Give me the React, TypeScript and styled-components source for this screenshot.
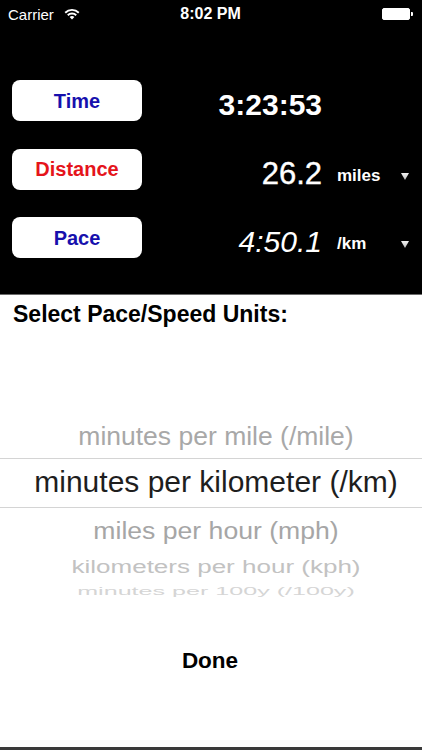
import React from "react";
import styled, { createGlobalStyle, css } from "styled-components";

const GlobalStyle = createGlobalStyle`
  html, body { margin: 0; padding: 0; background: #ffffff; }
  body { font-family: "Liberation Sans", Arial, Helvetica, sans-serif; }
  * { box-sizing: border-box; }
`;

const FONT = `"Liberation Sans", Arial, Helvetica, sans-serif`;

const Screen = styled.div`
  width: 422px;
  height: 750px;
  overflow: hidden;
  display: flex;
  flex-direction: column;
  background: #fff;
  font-family: ${FONT};
`;

const Header = styled.header`
  flex-shrink: 0;
  height: 295px;
  background: #000;
  border-bottom: 1px solid #6b6b6b;
  display: flex;
  flex-direction: column;
`;

const StatusBar = styled.div`
  height: 28px;
  display: grid;
  grid-template-columns: 1fr auto 1fr;
  align-items: center;
  padding: 0 9px 0 8px;
  color: #fff;
`;

const StatusLeft = styled.div`
  display: flex;
  align-items: center;
  gap: 10px;
  font-size: 15px;
  line-height: 1;
`;

const Clock = styled.div`
  font-size: 16px;
  font-weight: 700;
  line-height: 1;
`;

const StatusRight = styled.div`
  display: flex;
  justify-content: flex-end;
  align-items: center;
`;

const Battery = styled.div`
  display: flex;
  align-items: center;
  gap: 1px;
`;

const BatteryBody = styled.div`
  width: 28px;
  height: 12px;
  border: 1px solid #fff;
  border-radius: 2px;
  background: #fff;
`;

const BatteryNub = styled.div`
  width: 2px;
  height: 4px;
  background: #fff;
  border-radius: 0 1px 1px 0;
`;

const Rows = styled.div`
  display: flex;
  flex-direction: column;
  gap: 27.5px;
  padding-top: 52px;
`;

const Row = styled.div`
  display: flex;
  align-items: flex-start;
  height: 41px;
  padding: 0 13px 0 12px;
`;

const LabelButton = styled.button<{ $color: string }>`
  width: 130px;
  height: 41px;
  flex-shrink: 0;
  border: none;
  border-radius: 8px;
  background: #fff;
  color: ${(p) => p.$color};
  font: 700 20px/1 ${FONT};
  padding: 0;
  display: flex;
  align-items: center;
  justify-content: center;
`;

const Value = styled.div<{ $variant: "bold" | "medium" | "italic" }>`
  flex: 1;
  text-align: right;
  margin-top: 10px;
  font-size: 30px;
  line-height: 30px;
  color: #fff;
  white-space: nowrap;
  ${(p) =>
    p.$variant === "bold" &&
    css`
      font-weight: 700;
    `}
  ${(p) =>
    p.$variant === "medium" &&
    css`
      font-size: 31px;
      -webkit-text-stroke: 0.4px #fff;
    `}
  ${(p) =>
    p.$variant === "italic" &&
    css`
      font-style: italic;
      font-weight: 400;
    `}
`;

const Unit = styled.div`
  width: 79px;
  flex-shrink: 0;
  padding-left: 15px;
  margin-top: 18px;
  font: 700 17px/17px ${FONT};
  color: #fff;
  white-space: nowrap;
`;

const ArrowSlot = styled.div`
  width: 8px;
  height: 7px;
  flex-shrink: 0;
  margin-top: 24px;
  display: flex;
`;

const Sheet = styled.section`
  flex: 1;
  display: flex;
  flex-direction: column;
  background: #fff;
`;

const Title = styled.h2`
  margin: 0;
  padding: 7.5px 0 0 13px;
  font: 700 23px/23px ${FONT};
  color: #000;
`;

const Picker = styled.div`
  height: 272.5px;
  overflow: hidden;
  padding-top: 89.5px;
  display: flex;
  flex-direction: column;
`;

const PickerItem = styled.div<{
  $h: number;
  $size: number;
  $color: string;
  $selected?: boolean;
}>`
  flex-shrink: 0;
  height: ${(p) => p.$h}px;
  padding-left: 10px;
  display: flex;
  align-items: center;
  justify-content: center;
  font-size: ${(p) => p.$size}px;
  line-height: 1;
  color: ${(p) => p.$color};
  white-space: nowrap;
  ${(p) =>
    p.$selected &&
    css`
      border-top: 1px solid #d4d4d4;
      border-bottom: 1px solid #d4d4d4;
      padding-bottom: 3px;
    `}
`;

const ItemText = styled.span<{ $scale: number }>`
  display: inline-block;
  transform: scaleY(${(p) => p.$scale});
`;

const DoneButton = styled.button`
  margin: 52px auto 0;
  padding: 0;
  border: none;
  background: none;
  font: 700 22.5px/1 ${FONT};
  color: #000;
  transform: translateX(-1px);
`;

const BottomBar = styled.div`
  margin-top: auto;
  height: 3px;
  background: #3a3a3a;
  flex-shrink: 0;
`;

const WifiIcon = () => (
  <svg width="16" height="12" viewBox="0 0 16 12">
    <path d="M8 11.5 L5.6 9.1 A3.4 3.4 0 0 1 10.4 9.1 Z" fill="#fff" />
    <path d="M3.76 7.26 A6 6 0 0 1 12.24 7.26" stroke="#fff" strokeWidth="1.9" fill="none" />
    <path d="M1.21 4.71 A9.6 9.6 0 0 1 14.79 4.71" stroke="#fff" strokeWidth="1.9" fill="none" />
  </svg>
);

const DownArrow = () => (
  <svg width="8" height="7" viewBox="0 0 8 7">
    <defs>
      <linearGradient id="arr" x1="0" y1="0" x2="0" y2="1">
        <stop offset="0" stopColor="#f2f2f2" />
        <stop offset="1" stopColor="#bdbdbd" />
      </linearGradient>
    </defs>
    <polygon points="0,0 8,0 4,7" fill="url(#arr)" />
  </svg>
);

type RowData = {
  label: string;
  color: string;
  value: string;
  variant: "bold" | "medium" | "italic";
  unit?: string;
};

const rows: RowData[] = [
  { label: "Time", color: "#1710ad", value: "3:23:53", variant: "bold" },
  { label: "Distance", color: "#e5141b", value: "26.2", variant: "medium", unit: "miles" },
  { label: "Pace", color: "#1710ad", value: "4:50.1", variant: "italic", unit: "/km" },
];

const items = [
  { text: "minutes per mile (/mile)", h: 43, size: 26.5, color: "#a8a8a8", scale: 0.95 },
  { text: "minutes per kilometer (/km)", h: 50, size: 30, color: "#1e1e1e", scale: 1, selected: true },
  { text: "miles per hour (mph)", h: 47, size: 26.6, color: "#a6a6a6", scale: 0.9 },
  { text: "kilometers per hour (kph)", h: 24, size: 26, color: "#c2c2c2", scale: 0.7 },
  { text: "minutes per 100y (/100y)", h: 26, size: 25.1, color: "#d5d5d5", scale: 0.4 },
];

export default function App() {
  return (
    <>
      <GlobalStyle />
      <Screen>
        <Header>
          <StatusBar>
            <StatusLeft>
              <span>Carrier</span>
              <WifiIcon />
            </StatusLeft>
            <Clock>8:02 PM</Clock>
            <StatusRight>
              <Battery>
                <BatteryBody />
                <BatteryNub />
              </Battery>
            </StatusRight>
          </StatusBar>
          <Rows>
            {rows.map((r) => (
              <Row key={r.label}>
                <LabelButton $color={r.color}>{r.label}</LabelButton>
                <Value $variant={r.variant}>{r.value}</Value>
                <Unit>{r.unit ?? ""}</Unit>
                <ArrowSlot>{r.unit ? <DownArrow /> : null}</ArrowSlot>
              </Row>
            ))}
          </Rows>
        </Header>
        <Sheet>
          <Title>Select Pace/Speed Units:</Title>
          <Picker>
            {items.map((it) => (
              <PickerItem
                key={it.text}
                $h={it.h}
                $size={it.size}
                $color={it.color}
                $selected={it.selected}
              >
                <ItemText $scale={it.scale}>{it.text}</ItemText>
              </PickerItem>
            ))}
          </Picker>
          <DoneButton>Done</DoneButton>
          <BottomBar />
        </Sheet>
      </Screen>
    </>
  );
}
